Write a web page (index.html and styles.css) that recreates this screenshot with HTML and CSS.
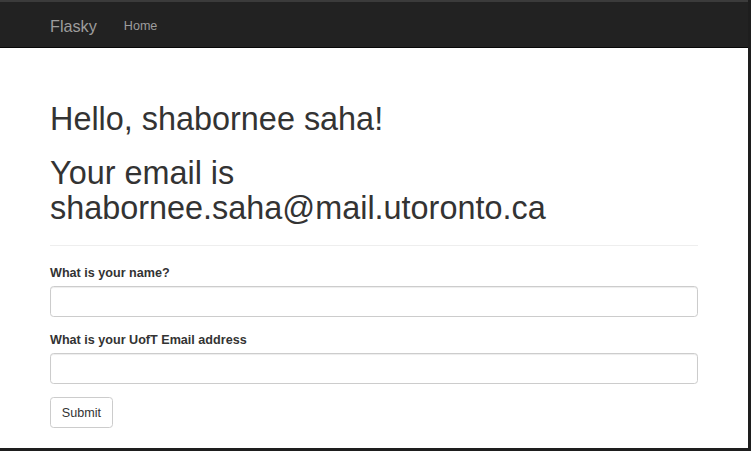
FILE: index.html
```html
<!DOCTYPE html>
<html lang="en">
<head>
<meta charset="utf-8">
<title>Flasky</title>
<link rel="stylesheet" href="styles.css">
</head>
<body>
<div class="window">
  <nav class="navbar">
    <div class="nav-inner">
      <a class="brand" href="#">Flasky</a>
      <a class="nav-link" href="#">Home</a>
    </div>
  </nav>
  <div class="container">
    <div class="page-header">
      <h1>Hello, shabornee saha!</h1>
      <h1>Your email is shabornee.saha@mail.utoronto.ca</h1>
    </div>
    <form class="form">
      <div class="form-group">
        <label class="label" for="name">What is your name?</label>
        <input class="input" id="name" type="text">
      </div>
      <div class="form-group">
        <label class="label" for="email">What is your UofT Email address</label>
        <input class="input" id="email" type="text">
      </div>
      <button class="btn" type="button">Submit</button>
    </form>
  </div>
</div>
</body>
</html>
```

FILE: styles.css
```css
html, body {
  margin: 0;
  padding: 0;
  background: #1e1e1e;
  height: 100%;
}
body {
  font-family: "Liberation Sans", Arial, Helvetica, sans-serif;
  font-size: 12.6px;
  line-height: 18px;
  color: #333;
}
.window {
  width: 748px;
  height: 446px;
  border-top: 2px solid #3b3b3b;
  background: #fff;
  overflow: hidden;
}
.navbar {
  height: 45px;
  background: #222;
  border-bottom: 1px solid #080808;
}
.nav-inner {
  display: flex;
  padding-left: 50px;
}
.brand {
  font-size: 16.2px;
  line-height: 18px;
  padding: 14.5px 13.5px 12.5px 0;
  color: #9d9d9d;
  text-decoration: none;
}
.nav-link {
  font-size: 12.6px;
  line-height: 18px;
  padding: 14.5px 13.5px 12.5px;
  color: #9d9d9d;
  text-decoration: none;
}
.container {
  width: 648px;
  padding-left: 50px;
  padding-top: 54px;
}
.page-header {
  padding-bottom: 9px;
  border-bottom: 1px solid #eee;
  margin-bottom: 18px;
}
h1 {
  font-size: 32.4px;
  font-weight: 500;
  line-height: 1.1;
  margin: 0 0 18px;
  color: #333;
}
h1:last-child {
  margin-bottom: 9px;
}
.form-group {
  margin-bottom: 13.5px;
}
.label {
  display: inline-block;
  font-weight: bold;
  margin-bottom: 4.5px;
}
.input {
  display: block;
  box-sizing: border-box;
  width: 100%;
  height: 30.6px;
  padding: 5.4px 10.8px;
  border: 1px solid #ccc;
  border-radius: 3.6px;
  box-shadow: inset 0 1px 1px rgba(0,0,0,.075);
  font-family: inherit;
  font-size: 12.6px;
  background: #fff;
  margin: 0;
}
.btn {
  display: inline-block;
  font-family: inherit;
  font-size: 12.6px;
  line-height: 18px;
  padding: 5.4px 10.8px;
  border: 1px solid #ccc;
  border-radius: 3.6px;
  background: #fff;
  color: #333;
  margin: 0;
}
```
